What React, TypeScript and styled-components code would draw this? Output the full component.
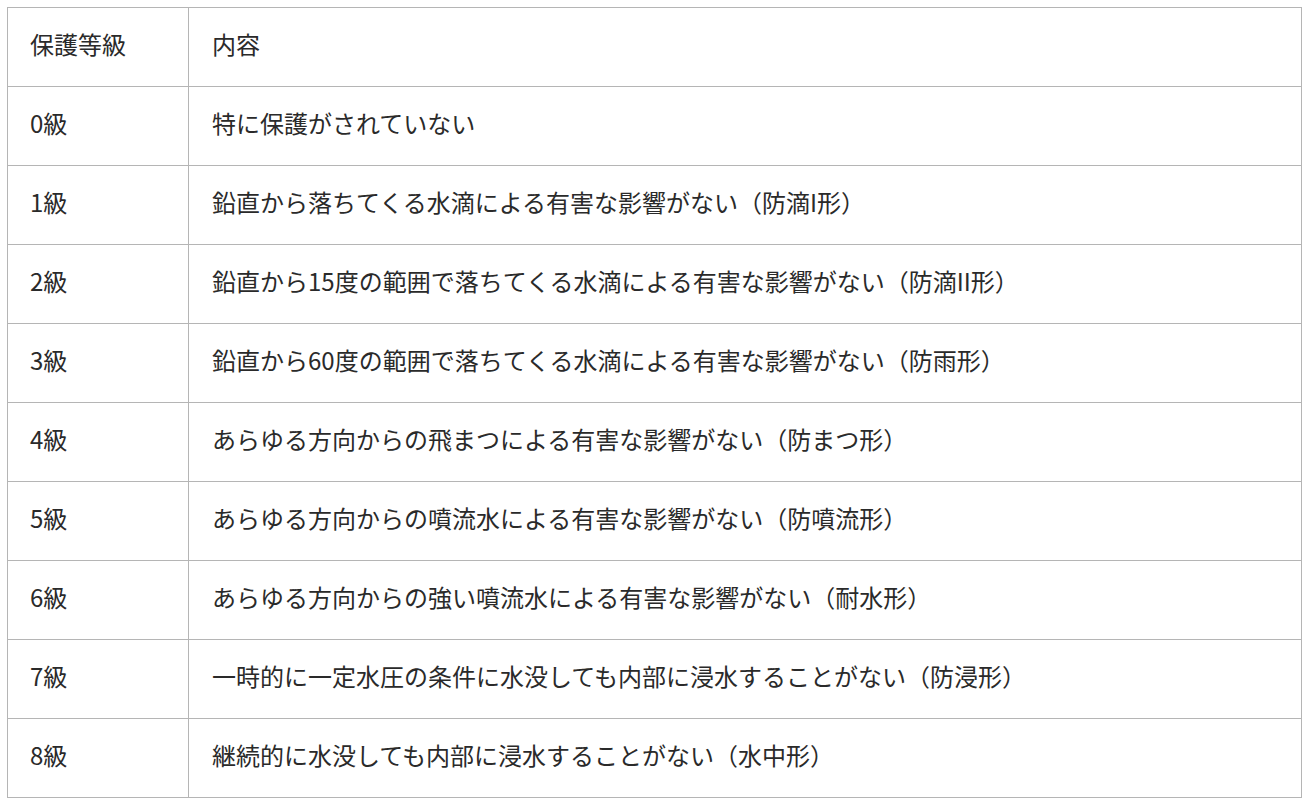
import React from "react";
import styled, { createGlobalStyle } from "styled-components";

const Global = createGlobalStyle`
  html, body { margin: 0; padding: 0; background: #fff; }
  body { padding: 7px; }
`;

const Table = styled.table`
  width: 1295px;
  border-collapse: collapse;
  table-layout: fixed;
  font-family: "Noto Sans CJK JP", "Noto Sans", sans-serif;
  font-size: 24px;
  color: #2a2a2a;
`;

const Cell = styled.td<{ $first?: boolean }>`
  border: 1px solid #b5b5b5;
  height: 79px;
  padding: 0 0 6px ${(p) => (p.$first ? 22 : 23)}px;
  vertical-align: middle;
  line-height: 1.5;
  box-sizing: border-box;
  width: ${(p) => (p.$first ? "181px" : "auto")};
`;

const rows: [string, string][] = [
  ["保護等級", "内容"],
  ["0級", "特に保護がされていない"],
  ["1級", "鉛直から落ちてくる水滴による有害な影響がない（防滴I形）"],
  ["2級", "鉛直から15度の範囲で落ちてくる水滴による有害な影響がない（防滴II形）"],
  ["3級", "鉛直から60度の範囲で落ちてくる水滴による有害な影響がない（防雨形）"],
  ["4級", "あらゆる方向からの飛まつによる有害な影響がない（防まつ形）"],
  ["5級", "あらゆる方向からの噴流水による有害な影響がない（防噴流形）"],
  ["6級", "あらゆる方向からの強い噴流水による有害な影響がない（耐水形）"],
  ["7級", "一時的に一定水圧の条件に水没しても内部に浸水することがない（防浸形）"],
  ["8級", "継続的に水没しても内部に浸水することがない（水中形）"],
];

export default function App() {
  return (
    <>
      <Global />
      <Table>
        <tbody>
          {rows.map(([a, b]) => (
            <tr key={a}>
              <Cell $first>{a}</Cell>
              <Cell>{b}</Cell>
            </tr>
          ))}
        </tbody>
      </Table>
    </>
  );
}
